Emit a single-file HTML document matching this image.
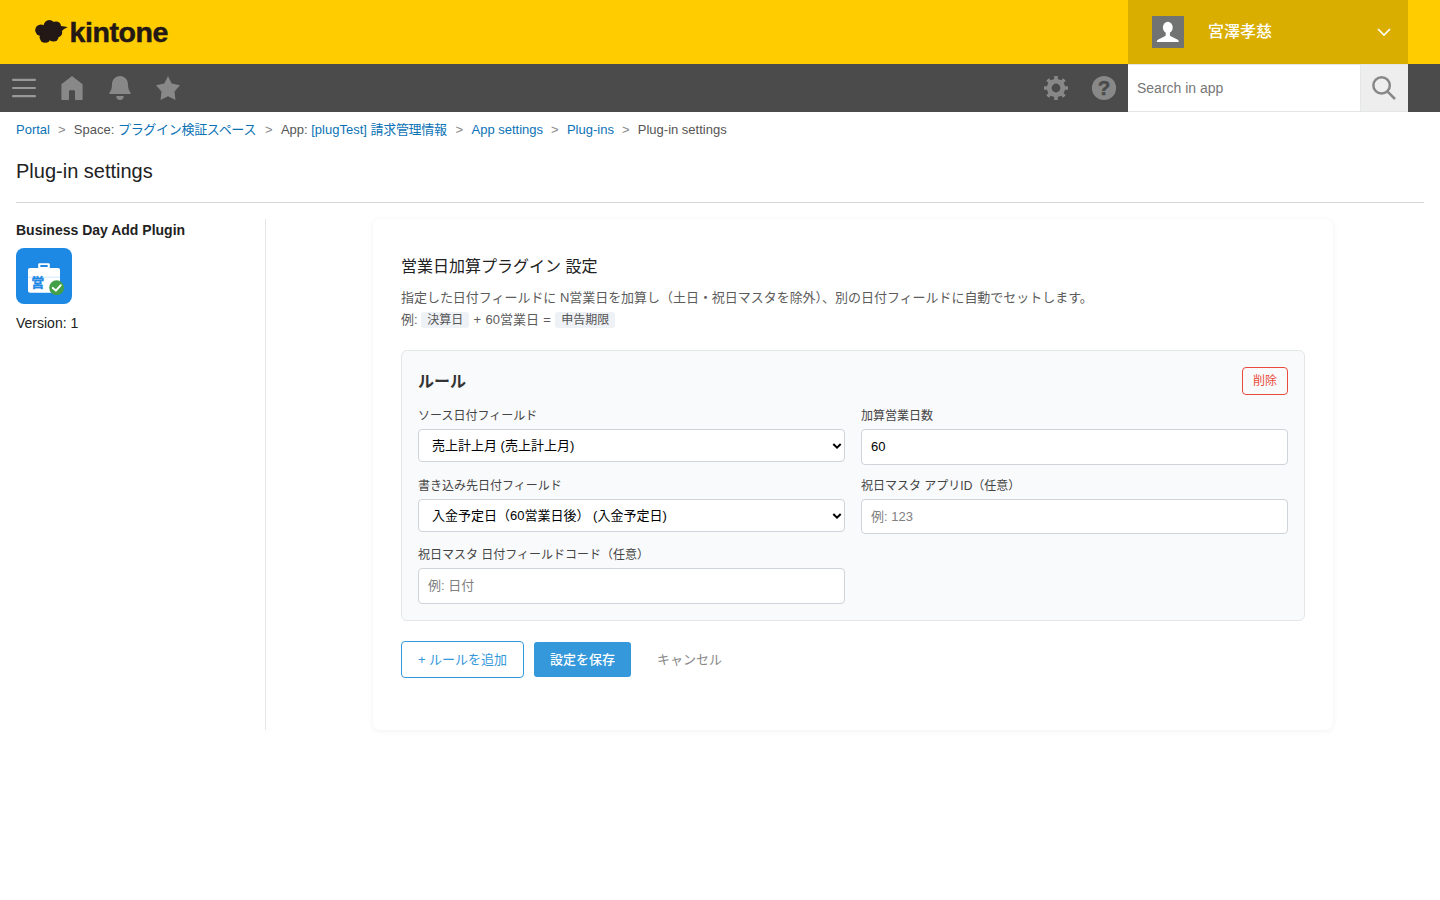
<!DOCTYPE html>
<html lang="ja">
<head>
<meta charset="utf-8">
<title>Plug-in settings</title>
<style>
*{box-sizing:border-box;margin:0;padding:0}
html,body{width:1440px;height:900px;overflow:hidden;background:#fff}
body{font-family:"Liberation Sans","Noto Sans CJK JP",sans-serif;color:#333;position:relative;font-size:14px}
a{text-decoration:none;color:#0b72b5}
.hdr{position:absolute;left:0;top:0;width:1440px;height:64px;background:#ffcc00}
.logo{position:absolute;left:30px;top:14px;height:36px}
.logo-text{position:absolute;left:39.500px;top:0.300px;font-weight:bold;font-size:28.500px;letter-spacing:-0.400px;-webkit-text-stroke:0.500px #231815;color:#231815;line-height:36px}
.user{position:absolute;left:1128px;top:0;width:280px;height:64px;background:#d9ae00}
.avatar{position:absolute;left:24px;top:16px;width:32px;height:32px;background:#717272;overflow:hidden}
.uname{position:absolute;left:80px;top:0;line-height:63px;font-size:16px;font-weight:500;color:#fff}
.chev{position:absolute;left:248px;top:26px}
.tb{position:absolute;left:0;top:64px;width:1440px;height:48px;background:#4b4b4b}
.tb svg{position:absolute}
.search{position:absolute;left:1128px;top:0;width:232px;height:48px;background:#fff;border-top:1px solid #e3e7e8;border-bottom:1px solid #e3e7e8}
.search span{position:absolute;left:9px;top:-1px;line-height:48px;font-size:14px;color:#777}
.sbtn{position:absolute;left:1360px;top:0;width:48px;height:48px;background:#eeeeee;border-left:1px solid #e3e7e8;border-top:1px solid #e3e7e8;border-bottom:1px solid #e3e7e8}
.bc{position:absolute;left:16px;top:121px;font-size:13px;line-height:18px;color:#555;white-space:nowrap}
.bc .j{letter-spacing:-0.3px;margin-right:0.9px}
.bc .sep{margin:0 8.3px 0 8px;color:#888}
.ttl{position:absolute;left:16px;top:158px;font-size:20px;line-height:26px;color:#222;font-weight:normal}
.hr{position:absolute;left:16px;top:202px;width:1408px;height:1px;background:#d8d8d8}
.pname{position:absolute;left:16px;top:221px;font-size:14px;font-weight:bold;line-height:18px;color:#222}
.picon{position:absolute;left:16px;top:248px;width:56px;height:56px}
.pver{position:absolute;left:16px;top:314px;font-size:14px;line-height:18px;color:#222}
.vline{position:absolute;left:265px;top:219px;width:1px;height:511px;background:#e3e7e8}
.panel{position:absolute;left:373px;top:219px;width:960px;height:511px;background:#fff;border-radius:8px;box-shadow:0 1px 6px rgba(0,0,0,0.06)}
.panel h2{position:absolute;left:28px;top:36px;font-size:16px;line-height:24px;font-weight:400;color:#222}
.desc{position:absolute;left:28px;top:68px;font-size:13px;line-height:21.5px;color:#5c5c5c;white-space:nowrap}
.desc code{font-family:inherit;font-size:12px;background:#eef1f5;border-radius:3px;padding:1px 6px;color:#555}
.rule{position:absolute;left:28px;top:131px;width:904px;height:271px;background:#f9fafb;border:1px solid #e3e7e8;border-radius:6px}
.rule h3{position:absolute;left:16px;top:19px;font-size:16px;line-height:24px;font-weight:bold;color:#333}
.del{position:absolute;left:840px;top:16px;width:46px;height:28px;border:1px solid #e74c3c;border-radius:4px;color:#e74c3c;font-size:12px;line-height:26px;text-align:center;background:transparent}
.lbl{position:absolute;font-size:12px;line-height:16px;color:#444;white-space:nowrap}
.fld{position:absolute;width:427px;background:#fff;border:1px solid #ced4da;border-radius:4px;font-size:13px;color:#000;white-space:nowrap}
.sel{height:33px;line-height:31px;padding-left:13px}
.inp{height:35px;line-height:33px;padding-left:9px}
.ph{color:#808080}
.fld svg{position:absolute;left:411.500px;top:11.500px}
.btn{position:absolute;font-size:13px;text-align:center;border-radius:3px;white-space:nowrap}
.b1{left:28px;top:422px;width:123px;height:37px;line-height:35px;border-radius:4px;border:1px solid #3498db;color:#3498db;background:#fff}
.b2{left:161px;top:423px;width:97px;height:35px;line-height:35px;background:#3498db;color:#fff;font-weight:500}
.b3{left:284px;top:423px;line-height:35px;color:#888}
</style>
</head>
<body>
<div class="hdr">
  <div class="logo">
    <svg width="50" height="36" viewBox="0 0 50 36"><g fill="#231815"><circle cx="11" cy="16.200" r="5.800"/><circle cx="19.400" cy="11.800" r="5.800"/><circle cx="26" cy="12.400" r="5"/><circle cx="27.200" cy="18.400" r="5"/><circle cx="15.200" cy="23.200" r="5.600"/><circle cx="23.600" cy="22.600" r="5"/><circle cx="19" cy="17.500" r="8"/><path d="M28 11L31 12C33.500 12.200 35.500 12.600 37.600 13.400C35.500 14 33.500 15 32 17L28 17z"/></g></svg>
    <span class="logo-text">kintone</span>
  </div>
  <div class="user">
    <div class="avatar"><svg width="32" height="32" viewBox="0 0 32 32"><g fill="#fff"><ellipse cx="15.800" cy="11.500" rx="4.900" ry="5.700"/><path d="M13.700 15.500h4.200v3.600c0 0.500 0.300 0.800 0.900 1.100l6.500 3.300c1 0.500 1.500 1.300 1.500 2.400H4.800c0-1.100 0.500-1.900 1.500-2.400l6.500-3.300c0.600-0.300 0.900-0.600 0.900-1.100z"/></g></svg></div>
    <span class="uname">宮澤孝慈</span>
    <svg class="chev" width="16" height="12" viewBox="0 0 16 12"><path d="M2 3L8 9L14 3" fill="none" stroke="#fff" stroke-width="1.600"/></svg>
  </div>
</div>
<div class="tb">
  <svg width="1440" height="48" viewBox="0 0 1440 48" style="left:0;top:0">
    <g fill="#999"><rect x="12" y="14.800" width="24" height="2.200" rx="1"/><rect x="12" y="22.900" width="24" height="2.200" rx="1"/><rect x="12" y="31" width="24" height="2.200" rx="1"/></g>
    <g fill="#888">
      <path d="M72 12L82.600 20.200V35.200a0.800 0.800 0 0 1-0.800 0.800H75.800a0.800 0.800 0 0 1-0.800-0.800V27a0.800 0.800 0 0 0-0.800-0.800H69.800a0.800 0.800 0 0 0-0.800 0.800v8.200a0.800 0.800 0 0 1-0.800 0.800H62.200a0.800 0.800 0 0 1-0.800-0.800V20.200z"/>
      <path d="M120 11.900c4.600 0 8 3.600 8 8.400c0 3.400 0.500 5.600 2.600 8.600V30H109.400v-1.100c2.100-3 2.600-5.200 2.600-8.600c0-4.800 3.400-8.400 8-8.400z"/>
      <path d="M116.300 32.100h7.400a3.700 3.900 0 0 1-7.400 0z"/>
      <path d="M168 12L171.700 19.600L180 21.200L174.500 27.600L175.500 36.100L168 32.300L160.500 36.100L161.500 27.600L156 21.200L164.300 19.600z"/>
      <path fill-rule="evenodd" d="M1054.18 14.98 L1054.23 12.03 L1057.77 12.03 L1057.82 14.98 L1061.09 16.34 L1063.21 14.28 L1065.72 16.79 L1063.66 18.91 L1065.02 22.18 L1067.97 22.23 L1067.97 25.77 L1065.02 25.82 L1063.66 29.09 L1065.72 31.21 L1063.21 33.72 L1061.09 31.66 L1057.82 33.02 L1057.77 35.97 L1054.23 35.97 L1054.18 33.02 L1050.91 31.66 L1048.79 33.72 L1046.28 31.21 L1048.34 29.09 L1046.98 25.82 L1044.03 25.77 L1044.03 22.23 L1046.98 22.18 L1048.34 18.91 L1046.28 16.79 L1048.79 14.28 L1050.91 16.34z M1060.400 24a4.400 4.400 0 1 0-8.800 0a4.400 4.400 0 1 0 8.800 0z"/>
      <circle cx="1104" cy="24" r="12.100"/>
    </g>
    <text x="1104" y="31.400" text-anchor="middle" font-family="Liberation Sans, sans-serif" font-weight="bold" font-size="20.5" fill="#4b4b4b" stroke="#4b4b4b" stroke-width="0.500">?</text>
  </svg>
    <div class="search"><span>Search in app</span></div>
  <div class="sbtn"><svg width="48" height="48" viewBox="0 0 48 48" style="left:-1px;top:-1px"><circle cx="21.600" cy="21.400" r="8.200" fill="none" stroke="#888" stroke-width="2.500"/><path d="M27.600 27.600L35 35" stroke="#888" stroke-width="2.500" fill="none"/></svg></div>
</div>
<div class="bc"><a>Portal</a><span class="sep">&gt;</span>Space: <a class="j">プラグイン検証スペース</a><span class="sep">&gt;</span>App: <a>[plugTest] <span class="j">請求管理情報</span></a><span class="sep">&gt;</span><a>App settings</a><span class="sep">&gt;</span><a>Plug-ins</a><span class="sep">&gt;</span>Plug-in settings</div>
<h1 class="ttl">Plug-in settings</h1>
<div class="hr"></div>
<div class="pname">Business Day Add Plugin</div>
<div class="picon"><svg width="56" height="56" viewBox="0 0 56 56"><rect width="56" height="56" rx="8" fill="#1e88e5"/><rect x="22.200" y="15.200" width="11.600" height="7" rx="1.200" fill="#fff"/><rect x="24.300" y="17" width="7.400" height="1.900" rx="0.500" fill="#1e88e5"/><rect x="12" y="20" width="32" height="24.800" rx="2" fill="#fff"/><rect x="12" y="28.800" width="32" height="0.700" fill="#bbdefb"/><text x="21.800" y="38.700" text-anchor="middle" font-family="Liberation Sans, Noto Sans CJK JP, sans-serif" font-weight="bold" font-size="13" fill="#1e88e5" stroke="#1e88e5" stroke-width="0.400">営</text><circle cx="40.600" cy="39.700" r="7.400" fill="#43a047"/><path d="M36.800 39.900L39.900 42.600L44.800 37.200" fill="none" stroke="#fff" stroke-width="2" stroke-linecap="round" stroke-linejoin="round"/></svg></div>
<div class="pver">Version: 1</div>
<div class="vline"></div>
<div class="panel">
  <h2>営業日加算プラグイン 設定</h2>
  <div class="desc"><span style="letter-spacing:-0.035px">指定した日付フィールドに N営業日を加算し（土日・祝日マスタを除外）、別の日付フィールドに自動でセットします。</span><br>例: <code>決算日</code><span style="word-spacing:0.7px"> + 60営業日 = </span><code>申告期限</code></div>
  <div class="rule">
    <h3>ルール</h3>
    <div class="del">削除</div>
    <div class="lbl" style="left:16px;top:57px">ソース日付フィールド</div>
    <div class="fld sel" style="left:16px;top:78px">売上計上月 (売上計上月)<svg width="12" height="9" viewBox="0 0 12 9"><path d="M2.300 2L6 5.700L9.700 2" fill="none" stroke="#000" stroke-width="2"/></svg></div>
    <div class="lbl" style="left:459px;top:57px">加算営業日数</div>
    <div class="fld inp" style="left:459px;top:78px;height:36px">60</div>
    <div class="lbl" style="left:16px;top:127px">書き込み先日付フィールド</div>
    <div class="fld sel" style="left:16px;top:148px">入金予定日（60営業日後） (入金予定日)<svg width="12" height="9" viewBox="0 0 12 9"><path d="M2.300 2L6 5.700L9.700 2" fill="none" stroke="#000" stroke-width="2"/></svg></div>
    <div class="lbl" style="left:459px;top:127px">祝日マスタ アプリID（任意）</div>
    <div class="fld inp ph" style="left:459px;top:148px">例: 123</div>
    <div class="lbl" style="left:16px;top:196px">祝日マスタ 日付フィールドコード（任意）</div>
    <div class="fld inp ph" style="left:16px;top:217px;height:36px">例: 日付</div>
  </div>
  <div class="btn b1">+ ルールを追加</div>
  <div class="btn b2">設定を保存</div>
  <div class="btn b3">キャンセル</div>
</div>
</body>
</html>
